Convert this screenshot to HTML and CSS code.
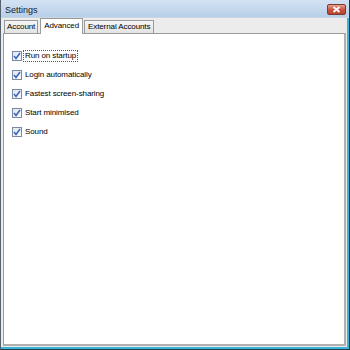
FILE: index.html
```html
<!DOCTYPE html>
<html>
<head>
<meta charset="utf-8">
<link rel="stylesheet" href="styles.css">
</head>
<body>
<div class="window">
  <div class="titlebar">
    <span class="title">Settings</span>
    <span class="close">
      <svg width="9" height="7" viewBox="0 0 9 7"><path d="M1.5 1 L7.5 6 M7.5 1 L1.5 6" stroke="#fff" stroke-width="1.8" fill="none"/></svg>
    </span>
  </div>
  <div class="body">
    <div class="tabs">
      <div class="tab">Account</div>
      <div class="tab active">Advanced</div>
      <div class="tab">External Accounts</div>
    </div>
    <div class="panel">
      <label class="row"><span class="box"><svg width="8" height="8" viewBox="0 0 8 8"><path d="M1 4 L3 6.5 L7 1" stroke="#3a62b8" stroke-width="1.5" fill="none"/></svg></span><span class="lbl focus">Run on startup</span></label>
      <label class="row"><span class="box"><svg width="8" height="8" viewBox="0 0 8 8"><path d="M1 4 L3 6.5 L7 1" stroke="#3a62b8" stroke-width="1.5" fill="none"/></svg></span><span class="lbl">Login automatically</span></label>
      <label class="row"><span class="box"><svg width="8" height="8" viewBox="0 0 8 8"><path d="M1 4 L3 6.5 L7 1" stroke="#3a62b8" stroke-width="1.5" fill="none"/></svg></span><span class="lbl">Fastest screen-sharing</span></label>
      <label class="row"><span class="box"><svg width="8" height="8" viewBox="0 0 8 8"><path d="M1 4 L3 6.5 L7 1" stroke="#3a62b8" stroke-width="1.5" fill="none"/></svg></span><span class="lbl">Start minimised</span></label>
      <label class="row"><span class="box"><svg width="8" height="8" viewBox="0 0 8 8"><path d="M1 4 L3 6.5 L7 1" stroke="#3a62b8" stroke-width="1.5" fill="none"/></svg></span><span class="lbl">Sound</span></label>
    </div>
  </div>
</div>
</body>
</html>
```
FILE: styles.css
```css
html, body {
  margin: 0;
  padding: 0;
  width: 350px;
  height: 350px;
  overflow: hidden;
  font-family: "Liberation Sans", "DejaVu Sans", sans-serif;
  font-size: 8px;
  color: #000;
}
.window {
  box-sizing: border-box;
  width: 350px;
  height: 350px;
  display: flex;
  flex-direction: column;
  border-left: 1px solid #56626e;
  border-right: 1px solid #1b3c52;
  border-bottom: 1px solid #1b3c52;
  background: #ececec;
  box-shadow: inset -2px 0 0 #3cb4d8, inset 0 -2px 0 #3cb4d8;
}
.titlebar {
  height: 17px;
  flex: none;
  display: flex;
  align-items: center;
  justify-content: space-between;
  padding: 0 3px 0 4px;
  background: linear-gradient(#d4e3f3, #b8cfe9);
  border-bottom: 1px solid #c9d6e4;
}
.title {
  font-size: 9px;
  color: #1a1a1a;
  margin-top: 2px;
}
.close {
  width: 19px;
  height: 11px;
  box-sizing: border-box;
  border: 1px solid #7a3a30;
  border-radius: 2px;
  background: linear-gradient(#e8a090, #c9503d 55%, #b84330);
  display: flex;
  align-items: center;
  justify-content: center;
  margin-top: 1px;
}
.body {
  flex: 1;
  display: flex;
  flex-direction: column;
  padding: 0 3px 3px 2px;
}
.tabs {
  display: flex;
  align-items: flex-end;
  height: 15px;
  padding-left: 1px;
  flex: none;
}
.tab {
  height: 13px;
  box-sizing: border-box;
  border: 1px solid #9a9a9a;
  border-bottom: none;
  background: linear-gradient(#f6f6f6, #e2e2e2);
  padding: 0 3px;
  line-height: 12px;
  margin-right: 1px;
  font-size: 8px;
  letter-spacing: -0.1px;
}
.tab:first-child {
  padding: 0 2px;
}
.tab.active {
  height: 16px;
  background: #fff;
  margin: 0 1px -1px 1px;
  line-height: 13px;
  position: relative;
  z-index: 1;
}
.panel {
  flex: 1;
  background: #fff;
  border: 1px solid #9a9a9a;
  border-right: 2px solid #b0b0b0;
  border-bottom: 2px solid #b0b0b0;
  display: flex;
  flex-direction: column;
  padding: 17px 0 0 8px;
  gap: 9px;
}
.row {
  display: flex;
  align-items: center;
  height: 10px;
  font-size: 8px;
  letter-spacing: -0.1px;
}
.box {
  width: 8px;
  height: 8px;
  border: 1px solid #7a8aa2;
  background: linear-gradient(135deg, #dfe6ef, #fafbfd);
  display: flex;
  align-items: center;
  justify-content: center;
  margin-right: 1px;
}
.lbl {
  line-height: 10px;
  padding: 0 1px;
  border: 1px solid transparent;
}
.lbl.focus {
  border: 1px dotted #555;
}
```
